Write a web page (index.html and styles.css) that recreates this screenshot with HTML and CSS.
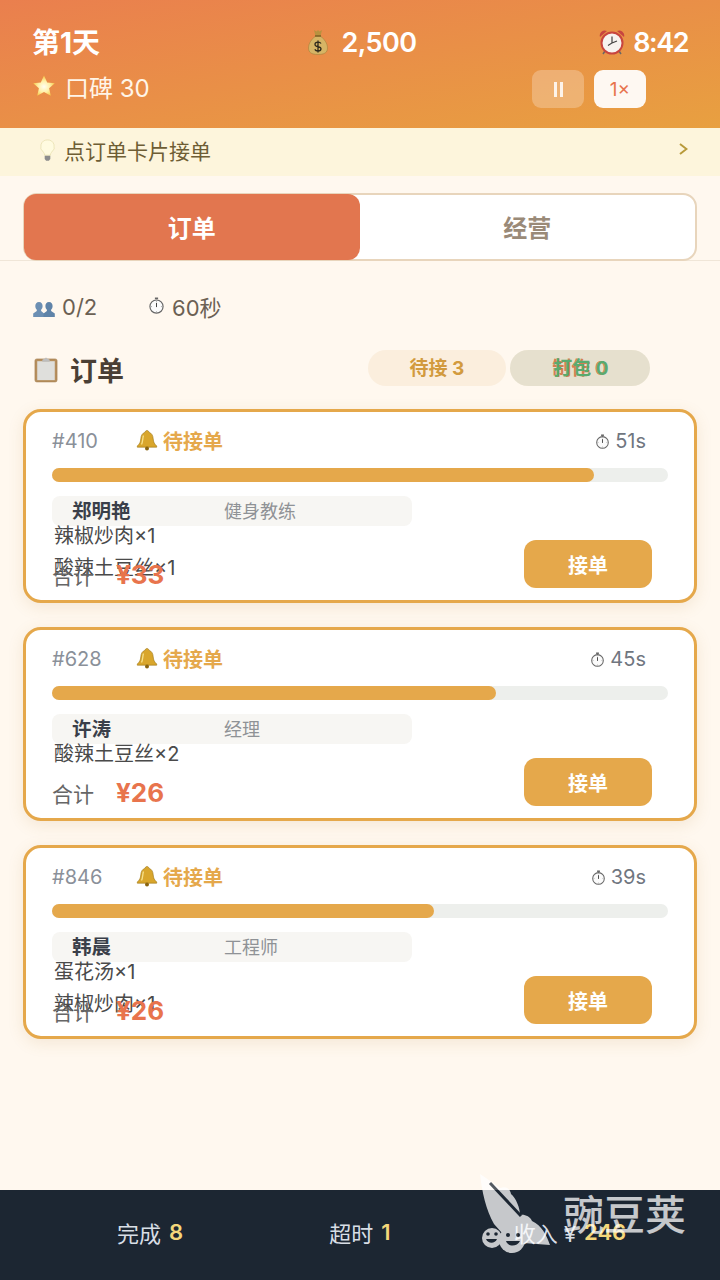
FILE: index.html
```html
<!DOCTYPE html>
<html lang="zh">
<head>
    <meta charset="UTF-8">
    <title>订单</title>
    <link rel="stylesheet" href="styles.css">
</head>
<body>
    <svg class="defs" width="0" height="0">
        <symbol id="i-watch" viewBox="0 0 16 16">
            <rect x="6.5" y="0.5" width="3" height="1.6" fill="#666"/>
            <circle cx="8" cy="9" r="6.2" fill="#fbfbfb" stroke="#666" stroke-width="1.1"/>
            <path d="M8 5.5V9.5" stroke="#444" stroke-width="1"/>
            <path d="M8 3.6v1M8 13.4v1M2.8 9h1M12.2 9h1" stroke="#999" stroke-width=".7"/>
        </symbol>
        <symbol id="i-bell" viewBox="0 0 22 22">
            <path d="M11 1.500c1.200 0 1.800.8 1.800 1.700 3 .9 4.200 3.500 4.400 6.600.2 3.400 1.300 5.200 3.500 7.200v1.200H1.300V17c2.200-2 3.300-3.800 3.500-7.200.2-3.100 1.400-5.700 4.400-6.600 0-.9.600-1.700 1.800-1.700z" fill="#d9a62c" stroke="#9a7414" stroke-width=".6"/>
            <path d="M7.500 6.500C6.500 9 7 13 5.500 15.500" stroke="#f6e08a" stroke-width="1.300" fill="none"/>
            <circle cx="11" cy="19.600" r="2" fill="#8a6410"/>
        </symbol>
    </svg>

    <header class="topbar">
        <div class="topbar-row">
            <div class="day">第1天</div>
            <div class="money">
                <svg class="ic-bag" viewBox="0 0 20 26">
                    <path d="M6 1l2.500 1.500L10 1l1.500 1.500L14 1l-1.500 6h-5z" fill="#b8923f"/>
                    <path d="M7.500 7h5C16 10 19.500 14 19.500 19c0 4.500-3 6.500-9.500 6.500S.5 23.500.5 19C.5 14 4 10 7.500 7z" fill="#d6b465" stroke="#a5813a" stroke-width=".6"/>
                    <path d="M7 7h6" stroke="#7a5c22" stroke-width="1.400"/>
                    <path d="M13 14.500c-.6-1-1.700-1.300-3-1.300-1.700 0-3 .8-3 2.200 0 3 6 1.500 6 4.400 0 1.400-1.400 2.200-3 2.200-1.500 0-2.600-.5-3.200-1.600M10 11.500v12" stroke="#2f2a1c" stroke-width="1.300" fill="none"/>
                </svg>
                <span>2,500</span>
            </div>
            <div class="clock">
                <svg class="ic-alarm" viewBox="0 0 26 26">
                    <path d="M1 8a5 5 0 0 1 7-6zM25 8a5 5 0 0 0-7-6z" fill="#c8453f"/>
                    <path d="M6 22l-2 3M20 22l2 3" stroke="#666" stroke-width="1.500"/>
                    <circle cx="13" cy="14" r="10.500" fill="#f7f3f0" stroke="#c8453f" stroke-width="2"/>
                    <path d="M13 7.500V14l-4 2.500M13 14l5-2" stroke="#444" stroke-width="1.200" fill="none"/>
                </svg>
                <span>8:42</span>
            </div>
        </div>
        <div class="topbar-row topbar-row-low">
            <div class="rep">
                <svg class="ic-star" viewBox="0 0 24 24">
                    <defs>
                        <radialGradient id="star-fill" cx="50%" cy="55%" r="55%">
                            <stop offset="0" stop-color="#fffdf0"/>
                            <stop offset=".5" stop-color="#fff0a8"/>
                            <stop offset="1" stop-color="#f5c33c"/>
                        </radialGradient>
                    </defs>
                    <path d="M12 1.500l3.200 7 7.600.8-5.700 5 1.700 7.500L12 18l-6.800 3.800 1.700-7.500-5.700-5 7.600-.8z" fill="url(#star-fill)"/>
                </svg>
                <span>口碑 30</span>
            </div>
            <div class="speed">
                <button class="speed-btn pause">
                    <svg viewBox="0 0 9 15" width="9" height="15"><path d="M0 0v15h3V0zM6 0v15h3V0z" fill="#fff" opacity=".85"/></svg>
                </button>
                <button class="speed-btn active">1×</button>
            </div>
        </div>
    </header>

    <div class="hint">
        <div class="hint-text">
            <svg class="ic-bulb" viewBox="0 0 16 24">
                <path d="M8 .7a7.300 7.300 0 0 0-4.300 13.200c.9.800 1.100 2 1.200 3.100h6.200c.1-1.100.3-2.300 1.200-3.100A7.300 7.300 0 0 0 8 .7z" fill="#fffbe0" stroke="#e6dfae" stroke-width=".8"/>
                <path d="M5 17.500h6v3.500l-1.500 2h-3L5 21z" fill="#8d8d8d"/>
            </svg>
            <span>点订单卡片接单</span>
        </div>
        <svg class="hint-arrow" viewBox="0 0 9 12"><path d="M1 1l6.500 5L1 11" fill="none" stroke="#b89a3a" stroke-width="2"/></svg>
    </div>

    <div class="tabs-wrap">
        <div class="tabs">
            <div class="tab tab-on">订单</div>
            <div class="tab">经营</div>
        </div>
    </div>

    <main class="content">
        <div class="stats">
            <div class="stat stat-people">
                <svg class="ic-people" viewBox="0 0 22 16">
                    <path d="M6 1c2.400 0 3.600 1.800 3.600 4 0 1.600-.7 3-1.500 3.700V10l3 2.500V16H.2v-3.500L3.800 10V8.700C3 8 2.300 6.600 2.300 5 2.300 2.800 3.600 1 6 1z" fill="#6c8fb3"/>
                    <path d="M16 1c2.400 0 3.600 1.800 3.600 4 0 1.600-.7 3-1.500 3.700V10l3.700 2.500V16H10.500v-3.500l3.400-2.500V8.700C13.100 8 12.400 6.600 12.400 5 12.400 2.800 13.600 1 16 1z" fill="#5f83a8"/>
                </svg>
                <span>0/2</span>
            </div>
            <div class="stat stat-time">
                <svg class="ic-watch-lg"><use href="#i-watch"/></svg>
                <span>60秒</span>
            </div>
        </div>

        <div class="section-head">
            <h2 class="section-title">
                <svg class="ic-board" viewBox="0 0 26 28">
                    <rect x="1" y="2.500" width="24" height="25" rx="2" fill="#b68f5e" stroke="#a37c4c" stroke-width=".6"/>
                    <rect x="3.500" y="5" width="19" height="20.500" fill="#dfdfdc"/>
                    <path d="M9 4c0-1.500 1.500-1.500 2.500-1.500C11.700 1 14.300 1 14.500 2.500c1 0 2.500 0 2.500 1.500v1.500H9z" fill="#bdbdbd"/>
                </svg>
                <span>订单</span>
            </h2>
            <div class="pills">
                <div class="pill pill-wait">待接 3</div>
                <div class="pill-stack">
                    <div class="pill pill-cook">制作 0</div>
                    <div class="pill pill-done">打包 0</div>
                </div>
            </div>
        </div>

        <section class="order">
            <div class="order-top">
                <span class="order-id">#410</span>
                <span class="order-state"><svg class="ic-bell"><use href="#i-bell"/></svg>待接单</span>
                <span class="order-time"><svg class="ic-watch"><use href="#i-watch"/></svg>51s</span>
            </div>
            <div class="bar"><div class="bar-fill" style="width: 88%"></div></div>
            <div class="order-main">
                <div class="order-list">
                    <div class="customer"><span class="customer-name">郑明艳</span><span class="customer-job">健身教练</span></div>
                    <div class="dish">辣椒炒肉×1</div>
                    <div class="dish">酸辣土豆丝×1</div>
                </div>
                <div class="order-foot">
                    <div class="total"><span class="total-label">合计</span><span class="total-num">¥33</span></div>
                    <button class="take">接单</button>
                </div>
            </div>
        </section>

        <section class="order">
            <div class="order-top">
                <span class="order-id">#628</span>
                <span class="order-state"><svg class="ic-bell"><use href="#i-bell"/></svg>待接单</span>
                <span class="order-time"><svg class="ic-watch"><use href="#i-watch"/></svg>45s</span>
            </div>
            <div class="bar"><div class="bar-fill" style="width: 72%"></div></div>
            <div class="order-main">
                <div class="order-list">
                    <div class="customer"><span class="customer-name">许涛</span><span class="customer-job">经理</span></div>
                    <div class="dish">酸辣土豆丝×2</div>
                </div>
                <div class="order-foot">
                    <div class="total"><span class="total-label">合计</span><span class="total-num">¥26</span></div>
                    <button class="take">接单</button>
                </div>
            </div>
        </section>

        <section class="order">
            <div class="order-top">
                <span class="order-id">#846</span>
                <span class="order-state"><svg class="ic-bell"><use href="#i-bell"/></svg>待接单</span>
                <span class="order-time"><svg class="ic-watch"><use href="#i-watch"/></svg>39s</span>
            </div>
            <div class="bar"><div class="bar-fill" style="width: 62%"></div></div>
            <div class="order-main">
                <div class="order-list">
                    <div class="customer"><span class="customer-name">韩晨</span><span class="customer-job">工程师</span></div>
                    <div class="dish">蛋花汤×1</div>
                    <div class="dish">辣椒炒肉×1</div>
                </div>
                <div class="order-foot">
                    <div class="total"><span class="total-label">合计</span><span class="total-num">¥26</span></div>
                    <button class="take">接单</button>
                </div>
            </div>
        </section>
    </main>

    <footer class="bottom">
        <div class="bottom-item">完成 <b>8</b></div>
        <div class="bottom-item">超时 <b>1</b></div>
        <div class="bottom-item">收入 ¥ <b>246</b></div>
    </footer>

    <div class="watermark">
        <svg class="wm-logo" viewBox="0 0 74 80">
            <path d="M0 0C2 18 6 36 14 50L30 68 70 71C66 60 62 52 52 47 50 42 44 40 40 41 40 34 36 24 31 20 30 14 26 12 20 14L6 4z" fill="#fff"/>
            <path d="M10 9L41 42" stroke="#1c2632" stroke-width="3"/>
            <circle cx="12" cy="64" r="10" fill="#fff"/>
            <circle cx="32" cy="66" r="13" fill="#fff"/>
            <circle cx="8" cy="60" r="1.800" fill="#1c2632"/>
            <circle cx="16" cy="60" r="1.800" fill="#1c2632"/>
            <circle cx="28" cy="61" r="2" fill="#1c2632"/>
            <circle cx="38" cy="61" r="2" fill="#1c2632"/>
            <path d="M6 65c2 5 9 5 11 0zM26 67c2 6 11 6 14 0z" fill="#1c2632"/>
        </svg>
        <span class="wm-text">豌豆荚</span>
    </div>
</body>
</html>
```

FILE: styles.css
```css
* {
    margin: 0;
    box-sizing: border-box;
}

body {
    width: 720px;
    height: 1280px;
    position: relative;
    overflow: hidden;
    display: flex;
    flex-direction: column;
    background-color: #fff8ef;
    font-family: Inter, "Noto Sans CJK SC", sans-serif;
    color: #4a3f35;
}

button {
    border: none;
    font-family: inherit;
}

.defs {
    position: absolute;
}

.topbar {
    height: 128px;
    padding: 22px 32px 0 32px;
    background: linear-gradient(170deg, #ea7f4e 0%, #e8a040 100%);
    color: white;
}

.topbar-row {
    height: 40px;
    display: grid;
    grid-template-columns: 1fr auto 1fr;
    align-items: center;
}

.topbar-row-low {
    height: 44px;
    margin-top: 1px;
    display: flex;
    justify-content: space-between;
    padding-right: 42px;
}

.day {
    margin-top: -2px;
    font-size: 28px;
    font-weight: 700;
}

.money {
    margin-left: 4px;
    display: flex;
    align-items: center;
    gap: 14px;
    font-size: 27px;
    font-weight: 600;
    letter-spacing: -0.6px;
}

.ic-bag {
    width: 20px;
    height: 26px;
}

.clock {
    display: flex;
    justify-content: flex-end;
    align-items: center;
    gap: 8px;
    font-size: 27px;
    font-weight: 600;
    letter-spacing: -1.5px;
}

.ic-alarm {
    width: 26px;
    height: 26px;
}

.rep {
    margin-top: 2px;
    display: flex;
    align-items: center;
    gap: 9px;
    font-size: 24px;
    color: #fff5e8;
}

.ic-star {
    width: 24px;
    height: 24px;
}

.speed {
    margin-top: 8px;
    display: flex;
    gap: 10px;
}

.speed-btn {
    width: 52px;
    height: 38px;
    border-radius: 9px;
    font-size: 19px;
    display: flex;
    align-items: center;
    justify-content: center;
}

.pause {
    background-color: rgba(255, 255, 255, 0.25);
}

.active {
    background-color: #fef8f2;
    color: #e8744d;
}

.hint {
    height: 48px;
    padding: 0 32px 0 40px;
    display: flex;
    justify-content: space-between;
    align-items: center;
    background-color: #fdf5dc;
    color: #6e5d34;
    font-size: 21px;
}

.hint-text {
    margin-top: -4px;
    display: flex;
    align-items: center;
    gap: 9px;
}

.ic-bulb {
    width: 15px;
    height: 23px;
}

.hint-arrow {
    width: 9px;
    height: 12px;
    margin-top: -6px;
}

.tabs-wrap {
    height: 85px;
    padding: 17px 23px 0 23px;
    border-bottom: 1px solid #f0e6d8;
}

.tabs {
    height: 68px;
    display: flex;
    border: 2px solid #e8d5bc;
    border-radius: 14px;
    background-color: white;
}

.tab {
    flex: 1;
    padding-bottom: 2px;
    display: flex;
    align-items: center;
    justify-content: center;
    font-size: 24px;
    font-weight: 700;
    color: #9a8a78;
}

.tab-on {
    margin: -1px 0 -1px -1px;
    background-color: #e2764f;
    border-radius: 12px;
    color: white;
}

.content {
    flex: 1;
    padding: 0 23px;
}

.stats {
    height: 80px;
    padding: 12px 0 0 10px;
    display: flex;
    align-items: center;
    font-size: 22px;
    color: #6b6053;
}

.stat {
    display: flex;
    align-items: center;
}

.stat-people {
    gap: 7px;
    width: 115px;
}

.stat-time {
    gap: 7px;
    margin-top: -3px;
}

.ic-people {
    width: 22px;
    height: 16px;
    margin-top: 4px;
}

.ic-watch-lg {
    width: 17px;
    height: 17px;
}

.section-head {
    height: 56px;
    display: flex;
    align-items: center;
    padding-left: 10px;
}

.section-title {
    width: 335px;
    padding-left: 1px;
    display: flex;
    align-items: center;
    gap: 12px;
    font-size: 27px;
    font-weight: 700;
    color: #4a3f35;
}

.ic-board {
    width: 24px;
    height: 27px;
}

.pills {
    display: flex;
    gap: 4px;
    margin-top: -2px;
}

.pill {
    height: 36px;
    width: 138px;
    padding-bottom: 3px;
    border-radius: 18px;
    display: flex;
    align-items: center;
    justify-content: center;
    font-size: 19px;
    font-weight: 700;
}

.pill-wait {
    background-color: #fbeedd;
    color: #d29a3e;
}

.pill-stack {
    display: grid;
}

.pill-stack .pill {
    grid-area: 1 / 1;
    width: 140px;
}

.pill-cook {
    background-color: rgba(232, 120, 79, 0.12);
    color: #e8784f;
}

.pill-done {
    padding-left: 2px;
    background-color: rgba(76, 175, 110, 0.12);
    color: #5aaa6e;
}

.order {
    height: 194px;
    margin-top: 12px;
    margin-bottom: 24px;
    padding: 14px 26px 0 26px;
    background-color: white;
    border: 3px solid #e5a84b;
    border-radius: 18px;
    box-shadow: 0 4px 16px rgba(180, 130, 60, 0.14);
}

.order + .order {
    margin-top: 0;
}

.order-top {
    height: 30px;
    display: flex;
    align-items: center;
    font-size: 20px;
}

.order-id {
    width: 84px;
    color: #8a9099;
}

.order-state {
    margin-top: -2px;
    display: flex;
    align-items: center;
    gap: 5px;
    font-weight: 700;
    color: #e5a84b;
}

.ic-bell {
    width: 22px;
    height: 22px;
}

.order-time {
    margin-left: auto;
    margin-right: 22px;
    display: flex;
    align-items: center;
    gap: 5px;
    color: #707680;
}

.ic-watch {
    width: 15px;
    height: 15px;
}

.bar {
    height: 14px;
    margin-top: 12px;
    border-radius: 7px;
    background-color: #edefec;
}

.bar-fill {
    height: 100%;
    border-radius: 7px;
    background-color: #e5a84b;
}

.order-main {
    display: grid;
    margin-top: 14px;
    height: 104px;
}

.order-list,
.order-foot {
    grid-area: 1 / 1;
}

.customer {
    width: 360px;
    height: 30px;
    padding: 0 0 2px 20px;
    display: flex;
    align-items: center;
    border-radius: 8px;
    background-color: #f7f6f3;
    font-size: 18px;
}

.customer-name {
    width: 152px;
    margin-top: -1px;
    font-size: 19.5px;
    font-weight: 700;
    color: #3a3f4a;
}

.customer-job {
    color: #8f9296;
}

.dish {
    height: 32px;
    padding-left: 2px;
    line-height: 20px;
    font-size: 20px;
    color: #4a4a4a;
    white-space: nowrap;
}

.order-foot {
    display: flex;
    justify-content: space-between;
    align-items: flex-end;
}

.total {
    display: flex;
    align-items: center;
    gap: 22px;
    margin-bottom: 10px;
}

.total-label {
    font-size: 21px;
    color: #666;
}

.total-num {
    font-size: 26px;
    font-weight: 700;
    color: #e8744d;
}

.take {
    width: 128px;
    height: 48px;
    margin-right: 16px;
    margin-bottom: 12px;
    border-radius: 12px;
    background-color: #e5a84b;
    color: white;
    font-size: 20px;
    font-weight: 700;
}

.bottom {
    height: 90px;
    padding: 0 45px 6px 45px;
    display: grid;
    grid-template-columns: repeat(3, 1fr);
    background-color: #1c2632;
    color: #d8dee6;
    font-size: 22px;
}

.bottom-item {
    display: flex;
    align-items: center;
    justify-content: center;
    gap: 8px;
}

.bottom-item b {
    color: #f5d77a;
    font-weight: 600;
}

.watermark {
    position: absolute;
    left: 480px;
    top: 1174px;
    display: flex;
    align-items: flex-start;
    opacity: 0.75;
}

.wm-logo {
    width: 74px;
    height: 80px;
}

.wm-text {
    margin-left: 9px;
    margin-top: 16px;
    font-size: 41px;
    font-weight: 500;
    line-height: 50px;
    color: white;
}
```
